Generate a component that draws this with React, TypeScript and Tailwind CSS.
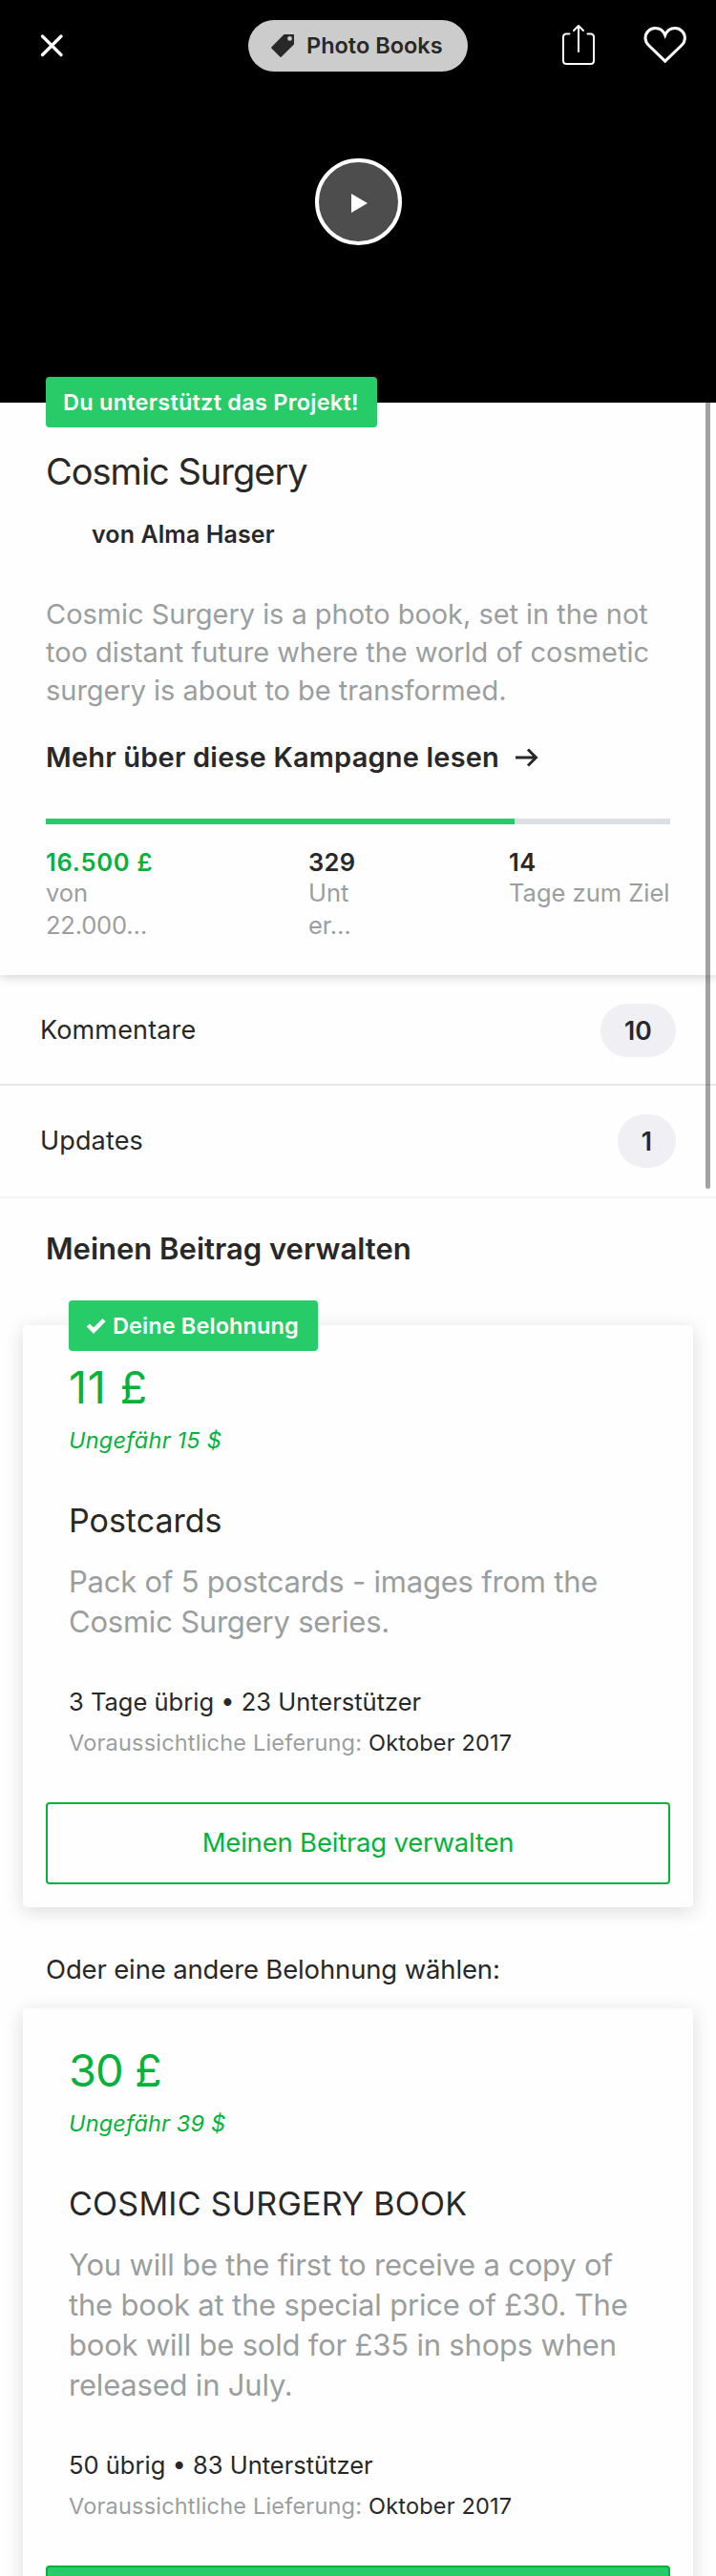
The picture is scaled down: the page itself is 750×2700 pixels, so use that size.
import type { ReactNode } from "react";

function Pill({ children }: { children: ReactNode }) {
  return (
    <span className="flex h-14 items-center rounded-full bg-[#efeff4] px-[25px] text-[26.5px] font-semibold leading-14">
      {children}
    </span>
  );
}

function Delivery() {
  return (
    <p className="mt-1 whitespace-nowrap text-[23.5px] leading-[37px] tracking-[0.2px] text-[#9b9e9e]">
      Voraussichtliche Lieferung: <span className="text-[#282828]">Oktober 2017</span>
    </p>
  );
}

export default function App() {
  return (
    <div className="relative h-[2700px] w-[750px] overflow-hidden bg-[#fefefe] font-[Inter,sans-serif] text-[#282828]">
      <header className="relative h-[422px] bg-black">
        <div className="flex h-24 items-center justify-center">
          <button className="flex h-[54px] w-[230px] items-center rounded-[27px] bg-[#cccccc] pl-[23px]">
            <svg width="26" height="26" viewBox="0 0 26 26" className="mr-3">
              <path fillRule="evenodd" fill="#282828" d="M14.500 1H24.500Q25 1 25 1.500V11.500L11.500 24.700Q11 25.200 10.500 24.700L1.300 15.500Q.8 15 1.300 14.500ZM20.500 3a2.400 2.400 0 1 0 0 4.800a2.400 2.400 0 0 0 0-4.800Z" />
            </svg>
            <span className="text-[23.5px] font-semibold">Photo Books</span>
          </button>
        </div>
        <svg className="absolute left-[42px] top-9" width="25" height="25" viewBox="0 0 25 25" fill="none" stroke="#fff" strokeWidth="3.200" strokeLinecap="round">
          <path d="M2.500 2l19.500 19.500M22 2L2.500 21.500" />
        </svg>
        <svg className="absolute left-[586px] top-[24px]" width="40" height="46" viewBox="0 0 40 46" fill="none" stroke="#fff" strokeWidth="2" strokeLinecap="round" strokeLinejoin="round">
          <path d="M10.500 11.500H7.500Q4 11.500 4 15V39.500Q4 43 7.500 43H32.500Q36 43 36 39.500V15Q36 11.500 32.500 11.500H29.500M20 30V3M15 8l5-5l5 5" />
        </svg>
        <svg className="absolute left-[672px] top-[26px]" width="50" height="42" viewBox="0 0 50 42" fill="none" stroke="#fff" strokeWidth="3">
          <path d="M24.700 38.200L8 22C5.400 19.500 4 17 4 13.900A10.300 10.300 0 0 1 14.300 3.600C19 3.600 22.800 6.300 24.700 11C26.600 6.300 30.400 3.600 35.100 3.600A10.300 10.300 0 0 1 45.400 13.900C45.400 17 44 19.500 41.400 22Z" />
        </svg>
        <div className="mx-auto mt-[70px] flex h-[91px] w-[91px] items-center justify-center rounded-full border-4 border-white bg-[#4d4d4d]">
          <svg width="17" height="20" viewBox="0 0 17 20" className="ml-[2px] mt-[2px]"><path d="M0 0L17 10L0 20Z" fill="#fff" /></svg>
        </div>
        <div className="absolute left-12 top-[395px] flex h-[53px] w-[347px] items-center rounded bg-[#27cc69] pl-[18px] text-[23.5px] font-semibold tracking-[0.24px] text-white">
          Du unterstützt das Projekt!
        </div>
      </header>

      <section className="h-[600px] bg-[#fefefe] px-12 pt-[46px] shadow-[0_2px_10px_rgba(0,0,0,0.18)]">
        <h1 className="text-[38px] leading-[52px] tracking-[-1px]">Cosmic Surgery</h1>
        <p className="mt-[20px] pl-12 text-[25px] font-semibold leading-[40px] tracking-[0.1px]">von Alma Haser</p>
        <p className="mt-[44px] whitespace-nowrap text-[29px] leading-10 tracking-[-0.04px] text-[#9b9e9e]">
          Cosmic Surgery is a photo book, set in the not<br />too distant future where the world of cosmetic<br />surgery is about to be transformed.
        </p>
        <a className="mt-[30px] flex h-10 items-center text-[29px] font-semibold leading-10 tracking-[0.18px]">
          Mehr über diese Kampagne lesen
          <svg width="24" height="20" viewBox="0 0 24 20" fill="none" stroke="#282828" strokeWidth="3" className="ml-[17px]">
            <path d="M0 10H21M13 1.500L21.500 10L13 18.500" />
          </svg>
        </a>
        <div className="mt-[44px] h-[6px] bg-[#dcdee6]"><div className="h-full w-3/4 bg-[#27cc69]" /></div>
        <div className="mt-6 grid grid-cols-[275px_210px_169px] whitespace-nowrap text-[25.5px] leading-[34px] text-[#9b9e9e]">
          <div><p className="font-semibold leading-[31px] tracking-[0.75px] text-[#07b23c]">16.500 £</p><p>von</p><p className="tracking-[-0.2px]">22.000…</p></div>
          <div><p className="font-semibold leading-[31px] tracking-[0.3px] text-[#282828]">329</p><p>Unt</p><p>er…</p></div>
          <div><p className="font-semibold leading-[31px] tracking-[0.5px] text-[#282828]">14</p><p>Tage zum Ziel</p></div>
        </div>
      </section>

      <nav className="text-[27px] tracking-[0.15px]">
        <a className="flex h-[116px] items-center justify-between border-b-2 border-[#e6e6e6] px-[42px] pt-[2px]">
          <span>Kommentare</span><Pill>10</Pill>
        </a>
        <a className="flex h-[118px] items-center justify-between border-b-2 border-[#f5f5f6] px-[42px]">
          <span>Updates</span><Pill>1</Pill>
        </a>
      </nav>

      <h2 className="mt-[33px] pl-12 text-[31px] font-semibold leading-10">Meinen Beitrag verwalten</h2>

      <article className="relative mx-6 mt-[60px] h-[610px] rounded bg-[#fefefe] px-12 pt-[40px] shadow-[0_4px_20px_rgba(0,0,0,0.14)]">
        <div className="absolute -top-[26px] left-12 flex h-[53px] w-[261px] items-center rounded bg-[#27cc69] pl-[18px] text-[23.5px] font-semibold tracking-[0.1px] text-white">
          <svg width="21" height="17" viewBox="0 0 21 17" fill="none" stroke="#fff" strokeWidth="4.500" className="mr-[7px]"><path d="M2.300 8L8 13.700L19 2.500" /></svg>
          Deine Belohnung
        </div>
        <p className="text-[47px] leading-[50px] tracking-[0.7px] text-[#07b23c]">11 £</p>
        <p className="mt-[10px] text-[23.5px] italic leading-[42px] tracking-[0.23px] text-[#07b23c]">Ungefähr 15 $</p>
        <h3 className="mt-[41px] text-[34px] leading-[44px]">Postcards</h3>
        <p className="mt-[21px] whitespace-nowrap text-[31px] leading-[42px] tracking-[-0.22px] text-[#9b9e9e]">
          Pack of 5 postcards - images from the<br />Cosmic Surgery series.
        </p>
        <p className="mt-[43px] text-[25.5px] leading-[40px]">3 Tage übrig • 23 Unterstützer</p>
        <Delivery />
        <button className="-mx-6 mt-[44px] flex h-[86px] w-[654px] items-center justify-center rounded border-2 border-[#07b23c] text-[27.5px] tracking-[-0.2px] text-[#07b23c]">
          Meinen Beitrag verwalten
        </button>
      </article>

      <p className="mt-[45px] pl-12 text-[27.5px] leading-10 tracking-[-0.15px]">Oder eine andere Belohnung wählen:</p>

      <article className="relative mx-6 mt-[21px] h-[700px] rounded bg-[#fefefe] px-12 pt-[40px] shadow-[0_4px_20px_rgba(0,0,0,0.14)]">
        <p className="text-[47px] leading-[50px] tracking-[-1px] text-[#07b23c]">30 £</p>
        <p className="mt-[10px] text-[23.5px] italic leading-[42px] tracking-[0.15px] text-[#07b23c]">Ungefähr 39 $</p>
        <h3 className="mt-[41px] text-[34px] leading-[44px] tracking-[0.25px]">COSMIC SURGERY BOOK</h3>
        <p className="mt-[21px] whitespace-nowrap text-[31px] leading-[42px] tracking-[-0.2px] text-[#9b9e9e]">
          You will be the first to receive a copy of<br />the book at the special price of £30. The<br />book will be sold for £35 in shops when<br />released in July.
        </p>
        <p className="mt-[43px] text-[25.5px] leading-[40px]">50 übrig • 83 Unterstützer</p>
        <Delivery />
        <div className="-mx-6 mt-[44px] h-[86px] w-[654px] rounded border-2 border-[#07b23c] bg-[#27cc69]" />
      </article>

      <div className="absolute left-[739px] top-[422px] h-[824px] w-[5px] rounded-b-full bg-black/36" />
    </div>
  );
}
